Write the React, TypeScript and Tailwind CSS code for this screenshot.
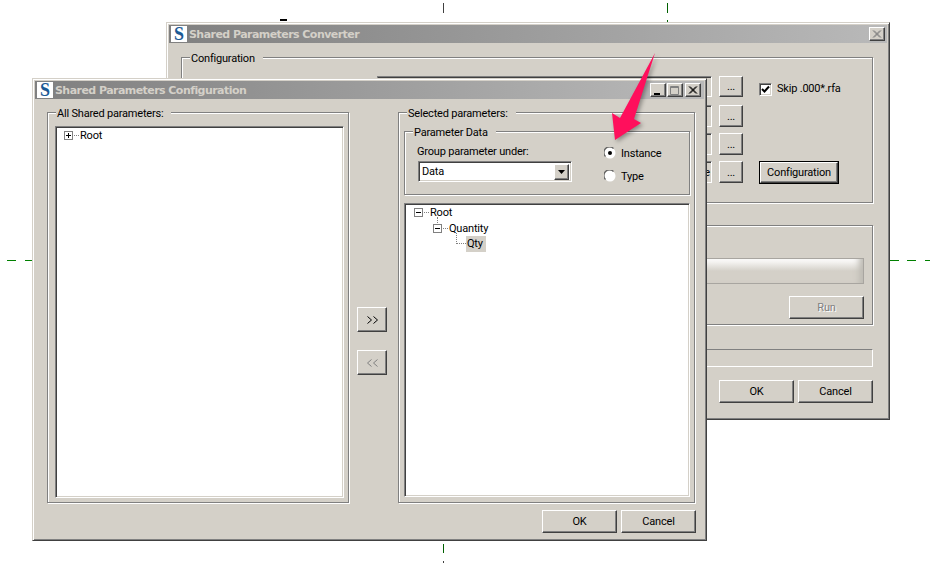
import type { ReactNode } from 'react';

const raised =
  'border border-t-white border-l-white border-r-[#404040] border-b-[#404040] shadow-[inset_-1px_-1px_0_#808080] bg-[#d4d0c8]';
const sunken =
  'border border-t-[#808080] border-l-[#808080] border-r-white border-b-white shadow-[inset_1px_1px_0_#404040,inset_-1px_-1px_0_#d4d0c8]';
const etched = 'border border-[#808080] shadow-[inset_1px_1px_0_#fff,1px_1px_0_#fff]';
const windowFrame =
  'absolute flex flex-col bg-[#d4d0c8] border border-t-[#d4d0c8] border-l-[#d4d0c8] border-r-[#404040] border-b-[#404040] shadow-[inset_1px_1px_0_#fff,inset_-1px_-1px_0_#808080] p-[2px]';

function AppIcon() {
  return (
    <div className="w-[16px] h-[16px] bg-white flex items-center justify-center shrink-0">
      <span className="font-['Liberation_Serif',serif] font-bold text-[18px] leading-none text-[#1c5a96]">S</span>
    </div>
  );
}

function TitleBar({ title, className, children }: { title: string; className: string; children: ReactNode }) {
  return (
    <div className={`h-[18px] flex items-center pl-[2px] bg-gradient-to-r from-[#808080] to-[#b9b9b9] shrink-0 ${className}`}>
      <AppIcon />
      <span className="ml-[2px] pt-[2px] font-['DejaVu_Sans',sans-serif] font-bold text-[11px] tracking-[-0.55px] text-[#d4d0c8] whitespace-nowrap">
        {title}
      </span>
      <div className="ml-auto flex">{children}</div>
    </div>
  );
}

function CaptionButton({ kind, disabled }: { kind: 'min' | 'max' | 'close'; disabled?: boolean }) {
  const c = disabled ? '#808080' : '#000';
  return (
    <div className={`${raised} w-[16px] h-[14px] flex items-center justify-center`}>
      <svg width="10" height="9" viewBox="0 0 10 9">
        {kind === 'min' && <rect x="1" y="7" width="6" height="2" fill="#000" />}
        {kind === 'max' && (
          <path d="M0.5 0.5H8.5V8.5H0.5Z M0.5 1.5H8.5" fill="none" stroke="#808080" />
        )}
        {kind === 'close' && <path d="M1 0.5L8 7.5M2 0.5L9 7.5M8 0.5L1 7.5M9 0.5L2 7.5" stroke={c} />}
      </svg>
    </div>
  );
}

function Group({ label, className, children }: { label: string; className: string; children?: ReactNode }) {
  return (
    <div className={`relative ${etched} ${className}`}>
      <span className="absolute -top-[6px] left-[8px] bg-[#d4d0c8] pl-[1px] pr-[8px] leading-[13px] whitespace-nowrap">
        {label}
      </span>
      {children}
    </div>
  );
}

function Btn({ children, className, disabled }: { children: ReactNode; className: string; disabled?: boolean }) {
  return (
    <div
      className={`${raised} flex items-center justify-center shrink-0 pt-[2px] ${className} ${
        disabled ? 'text-[#808080] [text-shadow:1px_1px_0_#fff]' : ''
      }`}
    >
      {children}
    </div>
  );
}

function Expander({ open }: { open?: boolean }) {
  return (
    <svg width="16" height="9" viewBox="0 0 16 9" className="shrink-0 overflow-visible">
      <rect x="0.5" y="0.5" width="8" height="8" fill="#fff" stroke="#808080" />
      <path d="M2 4.5H7" stroke="#000" />
      {!open && <path d="M4.5 2V7" stroke="#000" />}
      <path d="M10 4.5H15" stroke="#808080" strokeDasharray="1 1" />
    </svg>
  );
}

function Radio({ checked }: { checked?: boolean }) {
  return (
    <svg width="12" height="12" viewBox="0 0 12 12" className="shrink-0">
      <circle cx="6" cy="6" r="5.5" fill="#fff" />
      <path d="M1.5 9.5A5.5 5.5 0 0 1 9.5 1.5" fill="none" stroke="#606060" strokeWidth="1.2" />
      {checked && <circle cx="6" cy="6" r="2" fill="#000" />}
    </svg>
  );
}

function PathRow({ text, className }: { text?: string; className: string }) {
  return (
    <div className={`flex items-center gap-[7px] ${className}`}>
      <div className={`${sunken} w-[335px] h-full flex items-center justify-end pr-[1px] pt-[2px]`}>{text}</div>
      <Btn className="w-[24px] h-full">...</Btn>
    </div>
  );
}

function ConverterWindow() {
  return (
    <div className={`${windowFrame} left-[166px] top-[22px] w-[724px] h-[398px]`}>
      <TitleBar title="Shared Parameters Converter" className="pr-[2px]">
        <CaptionButton kind="close" disabled />
      </TitleBar>
      <Group label="Configuration" className="ml-[12px] mt-[14px] w-[692px] h-[146px] flex shrink-0 pl-[195px] pt-[18px]">
        <div className="flex flex-col gap-[6px]">
          <PathRow className="h-[21px] mb-[2px]" />
          <PathRow className="h-[22px]" />
          <PathRow className="h-[22px]" />
          <PathRow className="h-[22px]" text="File" />
        </div>
        <div className="ml-[16px] flex flex-col justify-between items-start h-[108px]">
          <div className="flex items-center gap-[5px] mt-[5px]">
            <div className={`${sunken} w-[13px] h-[13px] bg-white flex items-center justify-center`}>
              <svg width="9" height="9" viewBox="0 0 9 9">
                <path d="M1 4L3.5 6.5L8 1.5" fill="none" stroke="#000" strokeWidth="2" />
              </svg>
            </div>
            <span className="whitespace-nowrap">Skip .000*.rfa</span>
          </div>
          <div className="border border-black">
            <Btn className="w-[78px] h-[21px]">Configuration</Btn>
          </div>
        </div>
      </Group>
      <Group label="" className="ml-[12px] mt-[22px] w-[692px] h-[100px] shrink-0 flex flex-col items-end pr-[8px] pt-[32px]">
        <div className="w-[660px] h-[26px] border border-[#a8a5a0] bg-gradient-to-b from-white via-[#d4d0c8] to-[#d4d0c8] shadow-[inset_-8px_0_6px_-4px_#bdbab3]" />
        <Btn className="w-[75px] h-[23px] mt-[12px]" disabled>
          Run
        </Btn>
      </Group>
      <div className="ml-[12px] mt-[24px] w-[692px] h-[18px] shrink-0 border border-t-[#808080] border-l-[#808080] border-r-white border-b-white" />
      <div className="flex justify-end gap-[4px] mt-[13px] pr-[14px]">
        <Btn className="w-[75px] h-[23px]">OK</Btn>
        <Btn className="w-[75px] h-[23px]">Cancel</Btn>
      </div>
    </div>
  );
}

function ConfigurationWindow() {
  return (
    <div className={`${windowFrame} left-[32px] top-[78px] w-[675px] h-[463px]`}>
      <TitleBar title="Shared Parameters Configuration" className="pr-[3px]">
        <CaptionButton kind="min" />
        <div className="ml-[1px]">
          <CaptionButton kind="max" />
        </div>
        <div className="ml-[2px]">
          <CaptionButton kind="close" />
        </div>
      </TitleBar>
      <div className="flex ml-[12px] mt-[13px]">
        <Group label="All Shared parameters:" className="w-[302px] h-[391px] pl-[7px] pt-[13px]">
          <div className={`${sunken} w-[289px] h-[372px] bg-white pl-[8px]`}>
            <div className="flex items-center h-[16px]">
              <Expander />
              <span className="mt-[2px]">Root</span>
            </div>
          </div>
        </Group>
        <div className="w-[49px] pl-[8px] pt-[195px] flex flex-col gap-[18px]">
          <Btn className="w-[30px] h-[25px]">
            <Chevrons />
          </Btn>
          <Btn className="w-[30px] h-[25px]" disabled>
            <Chevrons back />
          </Btn>
        </div>
        <Group label="Selected parameters:" className="w-[297px] h-[391px] pl-[5px] pt-[18px]">
          <Group label="Parameter Data" className="w-[286px] h-[64px] flex pl-[12px] pt-[13px]">
            <div>
              <div className="leading-[14px]">Group parameter under:</div>
              <div className={`${sunken} ml-[1px] mt-[2px] w-[154px] h-[21px] bg-white flex items-center justify-between pl-[3px] pr-[2px]`}>
                <span className="mt-[2px]">Data</span>
                <div className={`${raised} w-[15px] h-[16px] flex items-center justify-center`}>
                  <svg width="7" height="4" viewBox="0 0 7 4">
                    <path d="M0 0H7L3.5 4Z" fill="#000" />
                  </svg>
                </div>
              </div>
            </div>
            <div className="ml-[32px] mt-[2px] flex flex-col gap-[11px]">
              <div className="flex items-center gap-[5px] h-[12px]">
                <Radio checked />
                <span className="mt-[2px]">Instance</span>
              </div>
              <div className="flex items-center gap-[5px] h-[12px]">
                <Radio />
                <span className="mt-[2px]">Type</span>
              </div>
            </div>
          </Group>
          <div className={`${sunken} mt-[8px] w-[286px] h-[294px] bg-white`}>
            <div className="flex items-center h-[16px] pl-[9px]">
              <Expander open />
              <span className="mt-[2px]">Root</span>
            </div>
            <div className="relative flex items-center h-[16px] pl-[28px]">
              <span className="absolute left-[32px] -top-[3px] h-[6px] border-l border-dotted border-[#808080]" />
              <Expander open />
              <span className="mt-[2px]">Quantity</span>
            </div>
            <div className="relative flex items-center h-[16px] pl-[61px]">
              <span className="absolute left-[51px] -top-[3px] h-[11px] w-[10px] border-l border-b border-dotted border-[#808080]" />
              <span className="bg-[#d4d0c8] px-[1px] w-[20px] leading-[16px]">Qty</span>
            </div>
          </div>
        </Group>
      </div>
      <div className="flex justify-end gap-[4px] mt-[7px] pr-[8px]">
        <Btn className="w-[75px] h-[23px]">OK</Btn>
        <Btn className="w-[75px] h-[23px]">Cancel</Btn>
      </div>
    </div>
  );
}

function Chevrons({ back }: { back?: boolean }) {
  return (
    <svg width="11" height="8" viewBox="0 0 11 8" className={back ? 'rotate-180 -mt-[2px]' : '-mt-[2px]'}>
      <path d="M0.5 0.5L4.5 4L0.5 7.5M6.5 0.5L10.5 4L6.5 7.5" fill="none" stroke="currentColor" />
    </svg>
  );
}

function Mark({ className }: { className: string }) {
  return <div className={`absolute ${className}`} />;
}

export default function App() {
  return (
    <div className="relative w-[930px] h-[563px] overflow-hidden bg-white font-['Roboto',sans-serif] text-[11px] tracking-[-0.2px] text-black">
      <Mark className="left-[7px] top-[260px] w-[9px] h-px bg-[#008000]" />
      <Mark className="left-[25px] top-[260px] w-[8px] h-px bg-[#008000]" />
      <Mark className="left-[890px] top-[260px] w-[9px] h-px bg-[#008000]" />
      <Mark className="left-[907px] top-[260px] w-[9px] h-px bg-[#008000]" />
      <Mark className="left-[925px] top-[260px] w-[5px] h-px bg-[#008000]" />
      <Mark className="left-[443px] top-[3px] w-px h-[10px] bg-[#404040]" />
      <Mark className="left-[667px] top-[3px] w-px h-[10px] bg-[#006000]" />
      <Mark className="left-[667px] top-[20px] w-px h-[2px] bg-[#006000]" />
      <Mark className="left-[443px] top-[544px] w-px h-[9px] bg-[#006000]" />
      <Mark className="left-[443px] top-[561px] w-px h-[2px] bg-[#404040]" />
      <Mark className="left-[280px] top-[19px] w-[7px] h-[2px] bg-black" />

      <ConverterWindow />
      <ConfigurationWindow />

      <svg width="930" height="563" viewBox="0 0 930 563" className="absolute left-0 top-0 pointer-events-none drop-shadow-[2px_2px_2px_rgba(0,0,0,0.35)]">
        <path d="M655 53L634 119L641 123L615 140L612 113L620 118Z" fill="#ff0f5c" />
      </svg>
    </div>
  );
}
